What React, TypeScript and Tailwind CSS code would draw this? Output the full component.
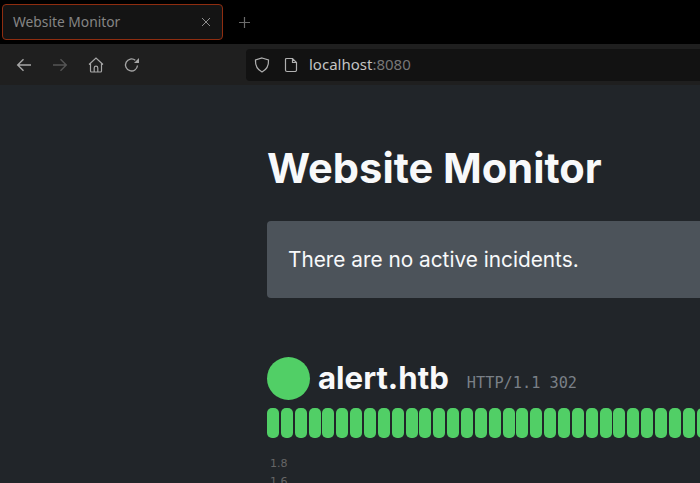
const bars = Array.from({ length: 40 }, (_, i) => i);

function BrowserBar() {
  return (
    <div className="font-['Noto_Sans',sans-serif]">
      <div className="flex h-[44px] items-center bg-black pl-[2px]">
        <div className="flex h-[36px] w-[221px] items-center justify-between rounded-[4px] border border-[#8f2d10] bg-[#141414] pl-[10px] pr-[11px] text-[13.800px] text-[#858585]">
          <span>Website Monitor</span>
          <svg width="10" height="10" viewBox="0 0 10 10" fill="none" stroke="#8c8c8c" strokeWidth="1">
            <path d="M1 1l8 8M9 1l-8 8" />
          </svg>
        </div>
        <svg className="ml-[15px]" width="13" height="13" viewBox="0 0 13 13" fill="none" stroke="#6b6b6b" strokeWidth="1.2">
          <path d="M6.500 1v11M1 6.500h11" />
        </svg>
      </div>
      <div className="flex h-[41px] items-center bg-[#1f1f1f]">
        <div className="ml-[16px] flex w-[230px] items-center">
          <svg width="16" height="16" viewBox="0 0 16 16" fill="none" stroke="#a6a6a6" strokeWidth="1.4">
            <path d="M15 8H2M7.500 2.200L1.700 8l5.800 5.800" />
          </svg>
          <svg className="ml-[20px]" width="16" height="16" viewBox="0 0 16 16" fill="none" stroke="#555555" strokeWidth="1.4">
            <path d="M1 8h13M8.500 2.200L14.300 8l-5.800 5.800" />
          </svg>
          <svg className="ml-[20px]" width="16" height="16" viewBox="0 0 16 16" fill="none" stroke="#a6a6a6" strokeWidth="1.2">
            <path d="M1 7.500L8 1l7 6.500M2.500 6.500V14a1 1 0 001 1h9a1 1 0 001-1V6.500M6.200 15v-4a1.800 1.800 0 013.600 0v4" />
          </svg>
          <svg className="ml-[20px]" width="16" height="16" viewBox="0 0 16 16" fill="none" stroke="#a6a6a6" strokeWidth="1.3">
            <path d="M13.500 8.500a6 6 0 11-2.200-5.200" />
            <path d="M15 1v5h-5z" fill="#a6a6a6" stroke="none" />
          </svg>
        </div>
        <div className="flex h-[32px] flex-1 items-center rounded-l-[4px] bg-[#121212] pl-[8px] text-[15px]">
          <svg width="16" height="16" viewBox="0 0 16 16" fill="none" stroke="#b0b0b0" strokeWidth="1.2">
            <path d="M8 1l6.500 2c.3 5.500-1.500 9.500-6.500 12C3 12.500 1.200 8.500 1.500 3z" />
          </svg>
          <svg className="ml-[14px]" width="14" height="16" viewBox="0 0 14 16" fill="none" stroke="#b0b0b0" strokeWidth="1.2">
            <path d="M2.500 1.500H8.500L12.500 5.500V13a1.500 1.500 0 01-1.500 1.500H3A1.500 1.500 0 011.500 13V2.500a1 1 0 011-1zM8.500 1.500v4h4" />
          </svg>
          <span className="ml-[11px] text-[#c4c4c4]">
            localhost<span className="text-[#777777]">:8080</span>
          </span>
        </div>
      </div>
    </div>
  );
}

export default function App() {
  return (
    <div className="h-[483px] w-[700px] overflow-hidden bg-[#212529] font-['Inter',sans-serif]">
      <BrowserBar />
      <main className="w-[700px] pl-[267px]">
        <h1 className="mt-[59px] whitespace-nowrap text-[41.600px] font-bold leading-[48px] text-[#f8f9fa]">
          Website Monitor
        </h1>
        <div className="mt-[29px] flex h-[77px] w-[500px] items-center rounded-[4px] bg-[#4c535a] pl-[21px] text-[20.800px] text-[#f8f9fa]">
          There are no active incidents.
        </div>
        <div className="mt-[59px] flex h-[43px] items-center whitespace-nowrap">
          <div className="h-[43px] w-[43px] rounded-full bg-[#51cf66]" />
          <h2 className="ml-[8px] text-[31.200px] font-bold text-[#f8f9fa]">alert.htb</h2>
          <span className="ml-[18px] mt-[10px] font-['DejaVu_Sans_Mono',monospace] text-[15.250px] text-[#7a8087]">
            HTTP/1.1 302
          </span>
        </div>
        <div className="mt-[8px] flex w-[600px] gap-[1.860px]">
          {bars.map((i) => (
            <div key={i} className="h-[30px] w-[12px] shrink-0 rounded-[5px] bg-[#51cf66]" />
          ))}
        </div>
        <div className="ml-[3px] mt-[17px] font-['DejaVu_Sans',sans-serif] text-[11px] leading-[18px] text-[#666666]">
          <div>1.8</div>
          <div>1.6</div>
        </div>
      </main>
    </div>
  );
}
